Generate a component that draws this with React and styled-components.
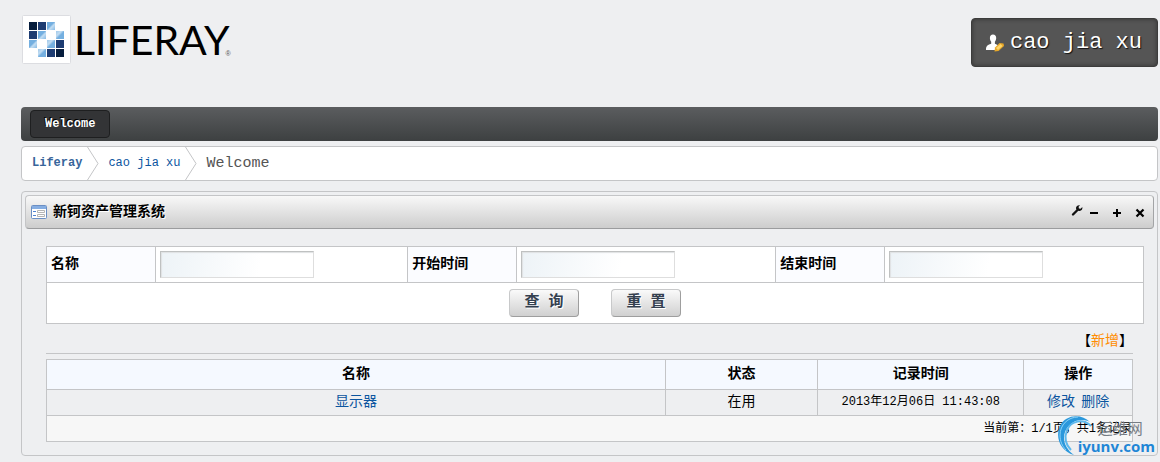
import React from "react";
import styled, { createGlobalStyle, css } from "styled-components";

const mono = `"Liberation Mono", "Noto Sans CJK SC", monospace`;
const cjk = `"Noto Sans CJK SC", sans-serif`;
const line = "#c4c5c7";

const Global = createGlobalStyle`
  * { box-sizing: border-box; }
  body {
    margin: 0;
    background: #eeeff1;
    color: #000;
    font: 14px/20px ${cjk};
  }
  a { color: #0b559f; text-decoration: none; }
`;

const Page = styled.div`
  padding: 15px 2px 6px 21px;
`;

const Header = styled.header`
  display: flex;
  justify-content: space-between;
  align-items: flex-start;
  height: 92px;
`;

const Logo = styled.a`
  display: flex;
  align-items: center;
  gap: 3px;
  padding-left: 1px;
  color: #000;
`;

const LogoMark = styled.svg`
  display: block;
  width: 49px;
  height: 49px;
`;

const Wordmark = styled.span`
  && { color: #000; }
  font: 41px/49px Lato, sans-serif;
`;

const Registered = styled.span`
  align-self: flex-end;
  margin: 0 0 6px -7px;
  font: 7px/8px "Liberation Sans", sans-serif;
  color: #555;
`;

const UserBox = styled.a`
  display: flex;
  align-items: center;
  gap: 6px;
  height: 49px;
  margin-top: 3px;
  padding: 0 15px 0 14px;
  border: 1px solid #3c3c3c;
  border-radius: 4px;
  background: #555;
  box-shadow: inset 0 0 4px #333;
  && { color: #fff; }
  font: 22px/30px ${mono};
  text-shadow: 1px 1px 1px #111;
`;

const Nav = styled.nav`
  display: flex;
  align-items: center;
  height: 34px;
  padding: 0 9px;
  border-radius: 4px;
  background: linear-gradient(#5b5d5f, #3d4041);
`;

const NavItem = styled.a`
  padding: 0 14px;
  border: 1px solid #1e1f20;
  border-radius: 4px;
  background: #333436;
  && { color: #fff; }
  font: bold 12px/26px ${mono};
  text-shadow: -1px -1px 0 #000;
`;

const Crumbs = styled.nav`
  display: flex;
  align-items: center;
  height: 35px;
  margin: 5px 0 10px;
  padding-left: 10px;
  border: 1px solid ${line};
  border-radius: 4px;
  background: #fff;
  font: 12px/33px ${mono};
`;

const Crumb = styled.a`
  color: ${(p) => (p.$strong ? "#37659b" : "#0b559f")};
  font-weight: ${(p) => (p.$strong ? "bold" : "normal")};
`;

const Current = styled.span`
  font-size: 15px;
  color: #555;
`;

const Arrow = styled.svg`
  width: 12px;
  height: 33px;
  margin: 0 9px 0 5px;
`;

const Portlet = styled.section`
  padding: 3px;
  border: 1px solid ${line};
  border-radius: 4px;
`;

const TitleBar = styled.header`
  display: flex;
  align-items: center;
  gap: 6px;
  height: 34px;
  padding: 0 7px 0 5px;
  border: 1px solid;
  border-color: #c4c5c7 #a3a4a6 #9b9c9e #c4c5c7;
  border-radius: 4px;
  background: linear-gradient(#f8f8f8, #cdcdcd);
`;

const Title = styled.h1`
  flex: 1;
  margin: 0;
  padding-bottom: 4px;
  font: bold 14px/28px ${cjk};
  text-shadow: 1px 1px 0 #fff;
`;

const Tools = styled.div`
  display: flex;
  align-items: center;
  gap: 5px;
`;

const ToolButton = styled.button`
  display: flex;
  padding: 0;
  border: 0;
  background: none;
`;

const Content = styled.div`
  padding: 17px 10px 10px 21px;
`;

const SearchTable = styled.table`
  width: 100%;
  border-collapse: collapse;
  table-layout: fixed;
  background: #fff;
`;

const cell = css`
  border: 1px solid ${line};
`;

const FieldHead = styled.th`
  ${cell}
  height: 36px;
  padding: 0 4px 6px;
  background: #fbfcff;
  text-align: left;
`;

const FieldCell = styled.td`
  ${cell}
  padding: 0 4px;
`;

const Field = styled.input`
  display: block;
  width: 154px;
  height: 27px;
  padding: 0 4px;
  border: 1px solid;
  border-color: #bfc1c1 #dedede #dedede #bfc1c1;
  background: linear-gradient(100deg, #edf3f7, #fff 65%);
  box-shadow: inset 1px 1px 1px #dfe2e3;
  font: 14px/20px ${cjk};
`;

const ActionCell = styled.td`
  ${cell}
  height: 41px;
  padding: 0;
`;

const Actions = styled.div`
  display: flex;
  justify-content: center;
  gap: 32px;
`;

const Button = styled.button`
  width: 70px;
  height: 28px;
  padding: 0;
  border: 1px solid;
  border-color: #c8c9ca #9e9e9e #9e9e9e #c8c9ca;
  border-radius: 4px;
  background: linear-gradient(#fafafa, #d0d0d0);
  color: #34404f;
  font: bold 15px/26px ${mono};
  text-shadow: 1px 1px 0 #fff;
  white-space: pre;
`;

const Results = styled.div`
  margin-right: 11px;
`;

const AddBar = styled.div`
  height: 30px;
  margin-bottom: 5px;
  padding-top: 5px;
  border-bottom: 1px solid ${line};
  text-align: right;
`;

const AddLink = styled.a`
  && { color: #ff8c00; }
`;

const DataTable = styled.table`
  width: 100%;
  border-collapse: collapse;
  table-layout: fixed;
`;

const HeadCell = styled.th`
  ${cell}
  height: 30px;
  padding: 0 4px 5px;
  background: #f5f9ff;
`;

const DataCell = styled.td`
  ${cell}
  height: 26px;
  padding: 0 4px 5px;
  text-align: center;
  line-height: 16px;
`;

const DateText = styled.time`
  font: 12px/16px ${mono};
`;

const FootCell = styled.td`
  ${cell}
  height: 26px;
  padding: 0;
  background: #f7f7f7;
  text-align: right;
  font: 12px/20px ${mono};
`;

const Watermark = styled.div`
  position: absolute;
  top: 414px;
  right: 5px;
  display: flex;
  pointer-events: none;
`;

const Ring = styled.svg`
  width: 44px;
  height: 44px;
  margin-right: -22px;
`;

const MarkText = styled.div`
  display: flex;
  flex-direction: column;
  padding-top: 5px;
`;

const MarkName = styled.span`
  padding-left: 20px;
  color: #777d85;
  font: 15px/18px ${cjk};
`;

const MarkSite = styled.span`
  color: #1f86d6;
  font: bold 15px/18px "Open Sans", sans-serif;
`;

const tiles = [
  [0, 0, "#061d3d"], [1, 0, "#1d3c72"], [2, 0, "url(#sky)"],
  [0, 1, "#1d3c72"], [1, 1, "url(#sky)"], [3, 1, "url(#pale)"],
  [0, 2, "url(#sky)"], [2, 2, "url(#pale)"], [3, 2, "#1d3c72"],
  [1, 3, "url(#pale)"], [2, 3, "#1d3c72"], [3, 3, "#061d3d"],
];

function LiferayMark() {
  return (
    <LogoMark viewBox="0 0 49 49" aria-hidden="true">
      <defs>
        <linearGradient id="sky" x1="0" y1="0" x2="1" y2="1">
          <stop offset="0.45" stopColor="#74afe0" />
          <stop offset="0.6" stopColor="#c3ddf2" />
          <stop offset="1" stopColor="#86bae5" />
        </linearGradient>
        <linearGradient id="pale" x1="0" y1="0" x2="1" y2="1">
          <stop offset="0" stopColor="#9fc8ea" />
          <stop offset="0.35" stopColor="#c3ddf2" />
          <stop offset="0.55" stopColor="#74afe0" />
        </linearGradient>
      </defs>
      <rect x="0.5" y="0.5" width="48" height="48" rx="1" fill="#fff" stroke="#dcdde1" />
      {tiles.map(([c, r, fill]) => (
        <rect key={`${c}-${r}`} x={7 + c * 9} y={7 + r * 9} width="8" height="8" fill={fill} />
      ))}
    </LogoMark>
  );
}

function Separator() {
  return (
    <Arrow viewBox="0 0 12 33" aria-hidden="true">
      <path d="M0.5 0 L11 16.5 L0.5 33" fill="none" stroke="#c4c5c7" />
    </Arrow>
  );
}

const fields = [
  ["name", "名称"],
  ["start", "开始时间"],
  ["end", "结束时间"],
];

export default function App() {
  return (
    <>
      <Global />
      <Page>
        <Header>
          <Logo href="#">
            <LiferayMark />
            <Wordmark>LIFERAY</Wordmark>
            <Registered>®</Registered>
          </Logo>
          <UserBox href="#">
            <svg width="18" height="18" viewBox="0 0 18 18" aria-hidden="true">
              <path d="M7 0.5c2 0 3.200 1.300 3.200 3.500 0 1.500-.6 2.900-1.300 3.700v2c2.300.8 4.200 1.700 4.200 3.800v2.500H0v-1.500c0-2.500 2-3.700 5.200-4.800v-2C4.400 6.900 3.900 5.500 3.900 4 3.900 1.800 5 .5 7 .5z" fill="#fff" />
              <path d="M8.500 17.500l.5-4 4.500-4.500 4 .5.5 2.500-5.500 5z" fill="#e9a929" />
              <path d="M10 14l4.500-4 2 2-4.500 4z" fill="#ffd66b" />
            </svg>
            cao jia xu
          </UserBox>
        </Header>

        <Nav>
          <NavItem href="#">Welcome</NavItem>
        </Nav>

        <Crumbs>
          <Crumb href="#" $strong>Liferay</Crumb>
          <Separator />
          <Crumb href="#">cao jia xu</Crumb>
          <Separator />
          <Current>Welcome</Current>
        </Crumbs>

        <Portlet>
          <TitleBar>
            <svg width="16" height="14" viewBox="0 0 16 14" aria-hidden="true">
              <rect x="0.5" y="0.5" width="15" height="13" rx="1" fill="#fff" stroke="#6b8fc4" />
              <rect x="1" y="1" width="14" height="3" fill="#86aee2" />
              <path d="M2 6.500h3M2 10.500h3" stroke="#4f83d2" />
              <path d="M6.500 5.500h7v2h-7zM6.500 9.500h7v2h-7z" fill="#fff" stroke="#b5b5b5" />
            </svg>
            <Title>新钶资产管理系统</Title>
            <Tools>
              <ToolButton aria-label="Configure">
                <svg width="12" height="18" viewBox="0 0 12 18">
                  <path d="M2 11.500L6 7.500" stroke="#111" strokeWidth="2.400" strokeLinecap="round" />
                  <path d="M9 2.300L7.600 3.800l.3 1.700 1.700.2 1.700-1.600c.5 2-.7 3.800-2.700 4-2.300.1-3.700-1.300-3.600-3C5.100 3.200 7 1.800 9 2.300z" fill="#111" />
                </svg>
              </ToolButton>
              <ToolButton aria-label="Minimize">
                <svg width="18" height="18" viewBox="0 0 18 18">
                  <path d="M2 10h8" stroke="#000" strokeWidth="2" />
                </svg>
              </ToolButton>
              <ToolButton aria-label="Maximize">
                <svg width="18" height="18" viewBox="0 0 18 18">
                  <path d="M2 10h8M6 6v8" stroke="#000" strokeWidth="2" />
                </svg>
              </ToolButton>
              <ToolButton aria-label="Close">
                <svg width="12" height="18" viewBox="0 0 12 18">
                  <path d="M2.500 6.500l7 7M9.500 6.500l-7 7" stroke="#000" strokeWidth="2.200" />
                </svg>
              </ToolButton>
            </Tools>
          </TitleBar>

          <Content>
            <form onSubmit={(e) => e.preventDefault()}>
              <SearchTable>
                <colgroup>
                  <col width="109" />
                  <col width="23%" />
                  <col width="109" />
                  <col />
                  <col width="109" />
                  <col />
                </colgroup>
                <tbody>
                  <tr>
                    {fields.map(([id, label]) => (
                      <React.Fragment key={id}>
                        <FieldHead><label htmlFor={id}>{label}</label></FieldHead>
                        <FieldCell><Field id={id} type="text" /></FieldCell>
                      </React.Fragment>
                    ))}
                  </tr>
                  <tr>
                    <ActionCell colSpan="6">
                      <Actions>
                        <Button type="submit">查 询</Button>
                        <Button type="reset">重 置</Button>
                      </Actions>
                    </ActionCell>
                  </tr>
                </tbody>
              </SearchTable>
            </form>

            <Results>
              <AddBar>【<AddLink href="#">新增</AddLink>】</AddBar>
              <DataTable>
                <colgroup>
                  <col width="57%" />
                  <col width="14%" />
                  <col width="19%" />
                  <col width="10%" />
                </colgroup>
                <thead>
                  <tr>
                    <HeadCell>名称</HeadCell>
                    <HeadCell>状态</HeadCell>
                    <HeadCell>记录时间</HeadCell>
                    <HeadCell>操作</HeadCell>
                  </tr>
                </thead>
                <tbody>
                  <tr>
                    <DataCell><a href="#">显示器</a></DataCell>
                    <DataCell>在用</DataCell>
                    <DataCell><DateText>2013年12月06日 11:43:08</DateText></DataCell>
                    <DataCell><a href="#">修改</a>&nbsp; <a href="#">删除</a></DataCell>
                  </tr>
                </tbody>
                <tfoot>
                  <tr>
                    <FootCell colSpan="4">当前第：1/1页，共1条记录</FootCell>
                  </tr>
                </tfoot>
              </DataTable>
            </Results>
          </Content>
        </Portlet>
      </Page>

      <Watermark>
        <Ring viewBox="0 0 44 44" aria-hidden="true">
          <path d="M34 8C25-1 9 1 4 12-1 23 4 37 18 41 10 35 6 27 9 18 13 8 24 3 34 8z" fill="#2b98dc" />
          <path d="M35 12C27 4 15 7 11 16c-3 8-1 15 4 20" fill="none" stroke="#5db8ec" strokeWidth="2" />
          <path d="M22 3C12 3 4 11 4 21c0 6 2 11 6 15" fill="none" stroke="#8ed2f5" />
        </Ring>
        <MarkText>
          <MarkName>运维网</MarkName>
          <MarkSite>iyunv.com</MarkSite>
        </MarkText>
      </Watermark>
    </>
  );
}
